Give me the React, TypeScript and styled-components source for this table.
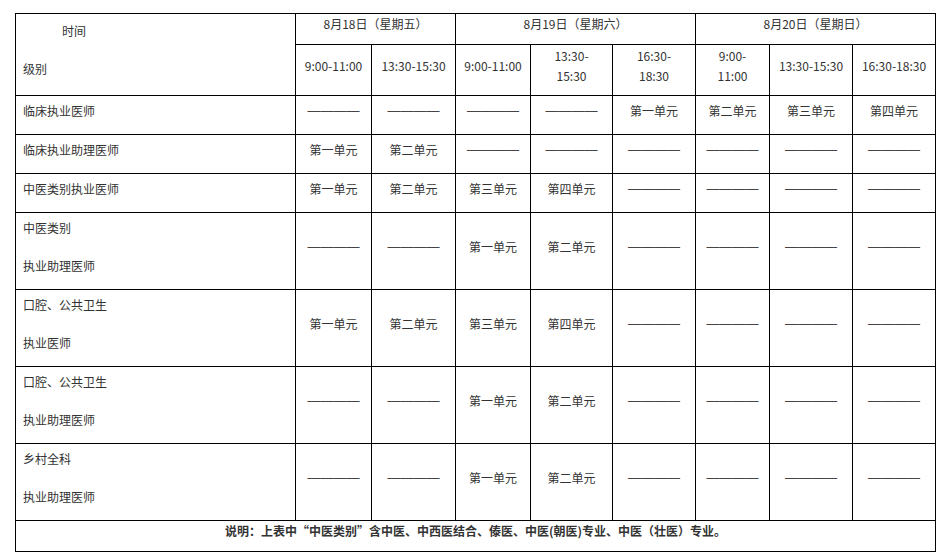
import styled, { createGlobalStyle } from "styled-components";

const GlobalStyle = createGlobalStyle`
  body {
    margin: 0;
    background: #ffffff;
    font-family: "Noto Sans CJK SC", "Noto Sans", sans-serif;
    font-size: 12px;
    color: #333333;
  }
`;

const Page = styled.div`
  padding: 13px 0 0 15px;
`;

const Table = styled.table`
  border-collapse: collapse;
  table-layout: fixed;
  width: 921px;
`;

const Row = styled.tr<{ $h: number }>`
  height: ${(p) => p.$h}px;
`;

const Cell = styled.td<{ $align?: "left" | "center"; $pb?: number }>`
  border: 1px solid #000000;
  padding: 0 2px ${(p) => p.$pb ?? 9}px
    ${(p) => (p.$align === "left" ? "7px" : "2px")};
  text-align: ${(p) => p.$align || "center"};
  vertical-align: middle;
  line-height: 20px;
  white-space: nowrap;
`;

const Footer = styled.td`
  border: 1px solid #000000;
  padding: 0 0 10px;
  text-align: center;
  vertical-align: middle;
  line-height: 20px;
  font-weight: bold;
  color: #333333;
`;

const Lines = styled.div<{ $gap: number }>`
  display: flex;
  flex-direction: column;
  gap: ${(p) => p.$gap}px;
  line-height: 19px;
`;

const Indent = styled.div`
  padding-left: 39px;
`;

const Dash = styled.span`
  font-family: "Liberation Sans", Arial, sans-serif;
  font-size: 13px;
  letter-spacing: 0;
  color: #444444;
`;

const colWidths = [280, 76, 84, 75, 82, 83, 74, 83, 83];

const days = ["8月18日（星期五）", "8月19日（星期六）", "8月20日（星期日）"];
const daySpans = [2, 3, 3];

const times: string[][] = [
  ["9:00-11:00"],
  ["13:30-15:30"],
  ["9:00-11:00"],
  ["13:30-", "15:30"],
  ["16:30-", "18:30"],
  ["9:00-", "11:00"],
  ["13:30-15:30"],
  ["16:30-18:30"],
];

interface ExamRow {
  label: string[];
  units: string[];
  tall: boolean;
}

const rows: ExamRow[] = [
  { label: ["临床执业医师"], units: ["", "", "", "", "第一单元", "第二单元", "第三单元", "第四单元"], tall: false },
  { label: ["临床执业助理医师"], units: ["第一单元", "第二单元", "", "", "", "", "", ""], tall: false },
  { label: ["中医类别执业医师"], units: ["第一单元", "第二单元", "第三单元", "第四单元", "", "", "", ""], tall: false },
  { label: ["中医类别", "执业助理医师"], units: ["", "", "第一单元", "第二单元", "", "", "", ""], tall: true },
  { label: ["口腔、公共卫生", "执业医师"], units: ["第一单元", "第二单元", "第三单元", "第四单元", "", "", "", ""], tall: true },
  { label: ["口腔、公共卫生", "执业助理医师"], units: ["", "", "第一单元", "第二单元", "", "", "", ""], tall: true },
  { label: ["乡村全科", "执业助理医师"], units: ["", "", "第一单元", "第二单元", "", "", "", ""], tall: true },
];

const App = () => {
  return (
    <Page>
      <GlobalStyle />
      <Table>
        <colgroup>
          {colWidths.map((w, i) => (
            <col key={i} style={{ width: w }} />
          ))}
        </colgroup>
        <tbody>
          <Row $h={31}>
            <Cell rowSpan={2} $align="left" $pb={11}>
              <Lines $gap={19}>
                <Indent>时间</Indent>
                <div>级别</div>
              </Lines>
            </Cell>
            {days.map((d, i) => (
              <Cell key={d} colSpan={daySpans[i]} $pb={10}>
                {d}
              </Cell>
            ))}
          </Row>
          <Row $h={51}>
            {times.map((t, i) => (
              <Cell key={i} $pb={9}>
                {t.map((line, j) => (
                  <div key={j}>{line}</div>
                ))}
              </Cell>
            ))}
          </Row>
          {rows.map((r, i) => (
            <Row key={i} $h={r.tall ? 77 : 39}>
              <Cell $align="left">
                <Lines $gap={19}>
                  {r.label.map((l) => (
                    <div key={l}>{l}</div>
                  ))}
                </Lines>
              </Cell>
              {r.units.map((u, j) => (
                <Cell key={j}>{u ? u : <Dash>————</Dash>}</Cell>
              ))}
            </Row>
          ))}
          <Row $h={30}>
            <Footer colSpan={9}>
              说明：上表中“中医类别”含中医、中西医结合、傣医、中医(朝医)专业、中医（壮医）专业。
            </Footer>
          </Row>
        </tbody>
      </Table>
    </Page>
  );
};

export default App;
